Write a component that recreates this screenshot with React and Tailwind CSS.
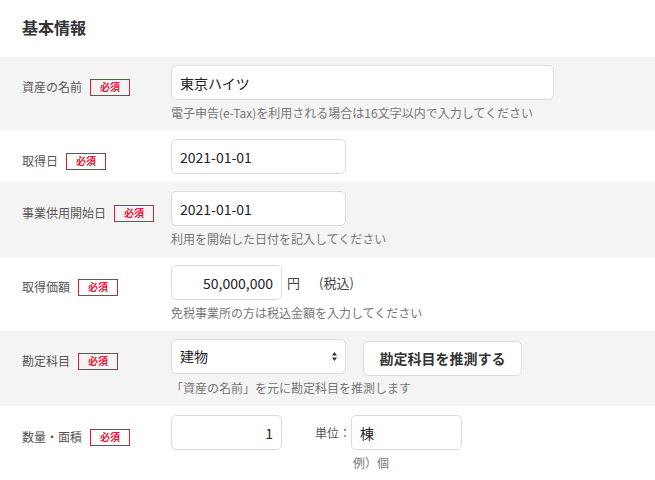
import React from "react";

const font = { fontFamily: '"Noto Sans CJK JP", "Noto Sans", sans-serif' };

const Badge = () => (
  <span className="ml-2 inline-flex h-[17px] w-[40px] items-center justify-center border border-[#e2183d] text-[10px] font-bold leading-none text-[#e2183d]">
    必須
  </span>
);

const Row = ({ label, gray, children, help, pad = "pt-2 pb-2", helpMt = "mt-1" }) => (
  <div className={`flex ${pad} ${gray ? "bg-[#f5f4f5]" : "bg-white"}`}>
    <div className="flex w-[171px] shrink-0 items-center self-start pl-[22px] pt-[13px] text-[12px] leading-[18px] text-[#555]">
      {label}
      <Badge />
    </div>
    <div className="flex flex-col">
      {children}
      {help && <p className={`${helpMt} text-[12px] leading-[18px] text-[#777]`}>{help}</p>}
    </div>
  </div>
);

const inputCls =
  "h-[35px] rounded-[5px] border border-[#dcdcdc] bg-white px-2 text-[14px] text-[#222] outline-none";

const SelectArrows = () => (
  <svg width="7" height="11" viewBox="0 0 7 11" className="text-[#333]">
    <path d="M3.5 1 L6 4.5 H1 Z" fill="currentColor" />
    <path d="M3.5 10 L6 6.5 H1 Z" fill="currentColor" />
  </svg>
);

export default function App() {
  return (
    <div style={font} className="w-[655px] min-h-[480px] bg-white">
      <h2 className="flex h-[57px] items-center pb-[3px] pl-[22px] text-[16px] font-bold text-[#333]">基本情報</h2>

      <Row label="資産の名前" gray help="電子申告(e-Tax)を利用される場合は16文字以内で入力してください">
        <input className={`${inputCls} w-[383px]`} defaultValue="東京ハイツ" />
      </Row>

      <Row label="取得日" pad="pt-[9px] pb-2">
        <input className={`${inputCls} w-[175px]`} defaultValue="2021-01-01" />
      </Row>

      <Row label="事業供用開始日" gray pad="pt-[9px] pb-[9px]" help="利用を開始した日付を記入してください">
        <input className={`${inputCls} w-[175px]`} defaultValue="2021-01-01" />
      </Row>

      <Row label="取得価額" pad="pt-2 pb-[9px]" help="免税事業所の方は税込金額を入力してください">
        <div className="flex items-center">
          <input className={`${inputCls} w-[111px] text-right`} defaultValue="50,000,000" />
          <span className="ml-[5px] text-[13px] text-[#444]">円</span>
          <span className="ml-[19px] text-[13px] text-[#444]">(税込)</span>
        </div>
      </Row>

      <Row label="勘定科目" gray pad="pt-2 pb-[9px]" helpMt="mt-[5px]" help="「資産の名前」を元に勘定科目を推測します">
        <div className="flex h-[35px] items-start">
          <div className={`${inputCls} flex w-[175px] shrink-0 items-center justify-between pr-[7px]`}>
            <span>建物</span>
            <SelectArrows />
          </div>
          <button className="ml-[17px] mt-[2px] h-[35px] w-[159px] shrink-0 rounded-[5px] border border-[#dcdcdc] bg-white text-[14px] font-bold text-[#333]">
            勘定科目を推測する
          </button>
        </div>
      </Row>

      <Row label="数量・面積" pad="pt-[9px] pb-2">
        <div className="flex items-start">
          <input className={`${inputCls} w-[111px] text-right`} defaultValue="1" />
          <span className="ml-[33px] flex h-[35px] items-center text-[12px] text-[#555]">単位：</span>
          <div className="flex flex-col">
            <input className={`${inputCls} w-[111px]`} defaultValue="棟" />
            <span className="ml-[2px] mt-1 text-[12px] leading-[18px] text-[#777]">例）個</span>
          </div>
        </div>
      </Row>
    </div>
  );
}
